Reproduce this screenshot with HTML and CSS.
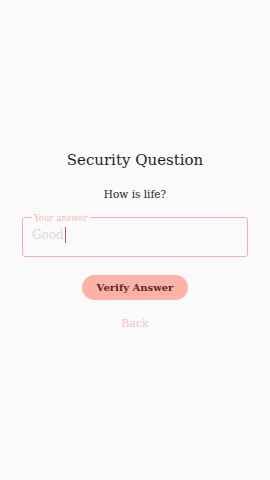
FILE: index.html
```html
<!DOCTYPE html>
<html lang="en">
  <head>
    <meta charset="UTF-8" />
    <meta name="viewport" content="width=device-width, initial-scale=1.0" />
    <title>Security Question</title>
    <link rel="stylesheet" href="styles.css">
  </head>
  <body>
    <div class="container">
      <h2 class="title">Security Question</h2>
      <div class="question">How is life?</div>
      <fieldset class="field">
        <legend>Your answer</legend>
        <div class="value">Good<span class="caret"></span></div>
      </fieldset>
      <button class="verify">Verify Answer</button>
      <div class="link">Back</div>
    </div>
  </body>
</html>
```

FILE: styles.css
```css
body {
  font-family: "DejaVu Serif", serif;
  display: flex;
  justify-content: center;
  align-items: center;
  height: 100vh;
  background-color: #fafafa;
  margin: 0;
}
.container {
  display: flex;
  flex-direction: column;
  align-items: center;
  width: 100%;
  padding: 0 22px;
  box-sizing: border-box;
}
.title {
  margin: 0;
  font-size: 15px;
  font-weight: normal;
  color: #1f1f1f;
}
.question {
  margin-top: 19px;
  font-size: 10.5px;
  color: #222;
}
.field {
  width: 100%;
  box-sizing: border-box;
  margin: 14px 0 0;
  padding: 0 9px 8px;
  height: 43px;
  border: 1.5px solid #f5aea8;
  border-radius: 3px;
}
.field legend {
  padding: 0 2px;
  font-size: 8.5px;
  color: #f5bcb7;
  line-height: 8px;
}
.value {
  font-size: 12px;
  color: #d9d9d9;
  display: flex;
  align-items: center;
  margin-top: 5px;
}
.caret {
  display: inline-block;
  width: 1.5px;
  height: 16px;
  background: #b55a55;
  margin-left: 1px;
}
.verify {
  margin-top: 18px;
  width: 106px;
  height: 25px;
  padding: 0;
  background: #fdb2a7;
  color: #5a2a24;
  border: none;
  border-radius: 13px;
  font-family: "DejaVu Serif", serif;
  font-weight: bold;
  font-size: 10px;
}
.link {
  margin-top: 17px;
  font-size: 11px;
  color: #f2c6c3;
}
```
